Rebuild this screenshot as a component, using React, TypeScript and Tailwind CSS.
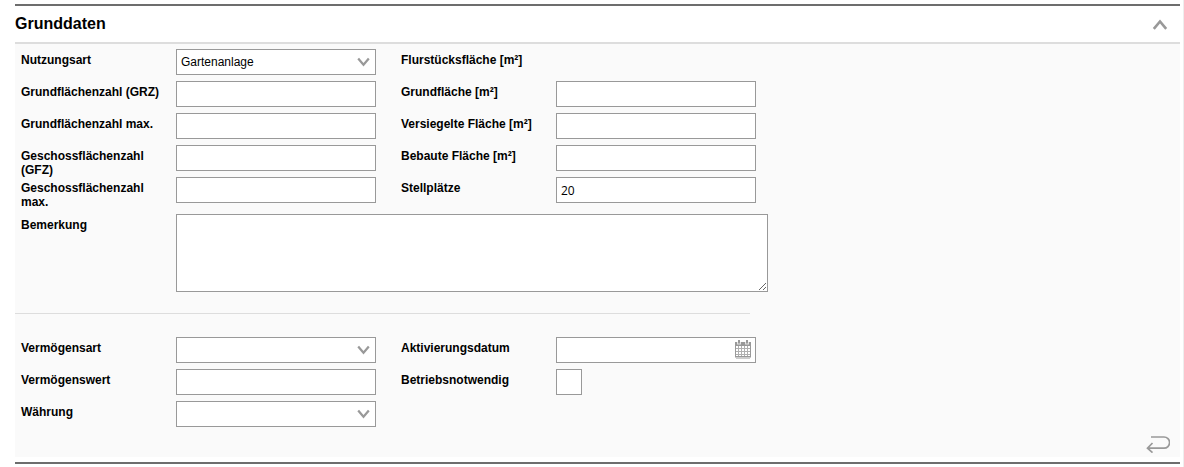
import React, { useState } from "react";

type FieldProps = {
    id: string;
    label: string;
    children?: React.ReactNode;
};

type SelectProps = {
    id: string;
    options: string[];
};

type InputProps = {
    id: string;
    defaultValue?: string;
};

const Field: React.FC<FieldProps> = ({ id, label, children }) => {
    return (
        <div className="flex h-8 items-start">
            <label htmlFor={id} className="w-[155px] shrink-0 pt-1 pr-3 font-bold">{label}</label>
            {children}
        </div>
    );
};

const TextInput: React.FC<InputProps> = ({ id, defaultValue }) => {
    return (
        <input
            id={id}
            type="text"
            defaultValue={defaultValue}
            className="h-[26px] w-[200px] border border-[#999] bg-white px-1 font-['Open_Sans','Noto_Sans',sans-serif] outline-none focus:border-[#555]"
        />
    );
};

const SelectInput: React.FC<SelectProps> = ({ id, options }) => {
    return (
        <div className="relative">
            <select id={id} className="block h-[26px] w-[200px] appearance-none border border-[#999] bg-white pr-6 pl-1 outline-none focus:border-[#555]">
                {options.map((option) => (
                    <option key={option} value={option}>{option}</option>
                ))}
            </select>
            <svg className="pointer-events-none absolute top-2 right-[6px] h-[10px] w-[13px]" viewBox="0 0 13 10" fill="none" stroke="#999" strokeWidth="2.2">
                <path d="M1.2 1.5 6.5 7.8 11.8 1.5" />
            </svg>
        </div>
    );
};

const CalendarIcon = () => (
    <svg className="h-[19px] w-4" viewBox="0 0 16 19">
        <rect x="0.5" y="2.5" width="15" height="14.5" fill="#fff" stroke="#999" />
        <path d="M0 2h16v4H0zM3 0h2v3H3zM11 0h2v3h-2z" fill="#999" />
        <path d="M2 2h1v1.5h2V2h1v2.5H2zM10 2h1v1.5h2V2h1v2.5h-4z" fill="#e4e4e4" />
        <path d="M1 8.5h14M1 11.5h14M1 14.5h14M3.5 6v10M6.5 6v10M9.5 6v10M12.5 6v10" fill="none" stroke="#b0b0b0" />
        <path d="M0 16h16v1H0z" fill="#999" />
        <path d="M1 17h14v2H1z" fill="#ccc" />
    </svg>
);

const App: React.FC = () => {

    const [open, setOpen] = useState<boolean>(true);

    return (
        <div className="min-h-screen border-r border-[#eee] bg-white pt-1 pr-[3px] pl-[15px] font-['Liberation_Sans',Arial,sans-serif] text-[12px] leading-[14px] text-black">
            <section className="border-y-2 border-[#6d6d6d]">
                <header className="flex h-[38px] items-center justify-between border-b-2 border-[#ddd] pr-3">
                    <h2 className="text-base font-bold">Grunddaten</h2>
                    <button type="button" aria-label="Bereich einklappen" aria-expanded={open} onClick={() => setOpen(!open)} className="cursor-pointer">
                        <svg className={open ? "h-[11px] w-4" : "h-[11px] w-4 rotate-180"} viewBox="0 0 16 11" fill="none" stroke="#999" strokeWidth="2.6">
                            <path d="M1.8 9.8 8 2.4 14.2 9.8" />
                        </svg>
                    </button>
                </header>
                {open && (
                    <form className="mb-[5px] bg-[#fafafa] pt-[5px]" onSubmit={(e) => e.preventDefault()}>
                        <div className="flex gap-[25px] pl-[6px]">
                            <div>
                                <Field id="nutzungsart" label="Nutzungsart">
                                    <SelectInput id="nutzungsart" options={["Gartenanlage"]} />
                                </Field>
                                <Field id="grz" label="Grundflächenzahl (GRZ)"><TextInput id="grz" /></Field>
                                <Field id="grz-max" label="Grundflächenzahl max."><TextInput id="grz-max" /></Field>
                                <Field id="gfz" label="Geschossflächenzahl (GFZ)"><TextInput id="gfz" /></Field>
                                <Field id="gfz-max" label="Geschossflächenzahl max."><TextInput id="gfz-max" /></Field>
                            </div>
                            <div>
                                <Field id="flurstueck" label="Flurstücksfläche [m²]"><output id="flurstueck" /></Field>
                                <Field id="grundflaeche" label="Grundfläche [m²]"><TextInput id="grundflaeche" /></Field>
                                <Field id="versiegelt" label="Versiegelte Fläche [m²]"><TextInput id="versiegelt" /></Field>
                                <Field id="bebaut" label="Bebaute Fläche [m²]"><TextInput id="bebaut" /></Field>
                                <Field id="stellplaetze" label="Stellplätze"><TextInput id="stellplaetze" defaultValue="20" /></Field>
                            </div>
                        </div>
                        <div className="flex items-start pt-[5px] pl-[6px]">
                            <label htmlFor="bemerkung" className="w-[155px] shrink-0 pt-1 font-bold">Bemerkung</label>
                            <textarea id="bemerkung" className="block h-[78px] w-[592px] border border-[#999] bg-white px-1 outline-none focus:border-[#555]" />
                        </div>
                        <hr className="mt-[21px] mb-[23px] w-[735px] border-[#ddd]" />
                        <div className="flex gap-[25px] pl-[6px]">
                            <div>
                                <Field id="vermoegensart" label="Vermögensart"><SelectInput id="vermoegensart" options={[""]} /></Field>
                                <Field id="vermoegenswert" label="Vermögenswert"><TextInput id="vermoegenswert" /></Field>
                                <Field id="waehrung" label="Währung"><SelectInput id="waehrung" options={[""]} /></Field>
                            </div>
                            <div>
                                <Field id="aktivierung" label="Aktivierungsdatum">
                                    <div className="relative">
                                        <TextInput id="aktivierung" />
                                        <button type="button" aria-label="Kalender öffnen" className="absolute top-[3px] right-[5px] cursor-pointer">
                                            <CalendarIcon />
                                        </button>
                                    </div>
                                </Field>
                                <Field id="betrieb" label="Betriebsnotwendig">
                                    <input id="betrieb" type="checkbox" className="size-[26px] appearance-none border border-[#999] bg-white checked:bg-[#999]" />
                                </Field>
                            </div>
                        </div>
                        <div className="flex justify-end pr-[10px] pb-1">
                            <button type="button" aria-label="Zurücksetzen" className="cursor-pointer">
                                <svg className="h-5 w-6" viewBox="0 0 24 20" fill="none" stroke="#999" strokeWidth="1.7">
                                    <path d="M5 4H18a5.2 5.2 0 0 1 0 11.2H1.5M6.5 10 1.5 15.2 6.5 19.6" />
                                </svg>
                            </button>
                        </div>
                    </form>
                )}
            </section>
        </div>
    );
};

export default App;
